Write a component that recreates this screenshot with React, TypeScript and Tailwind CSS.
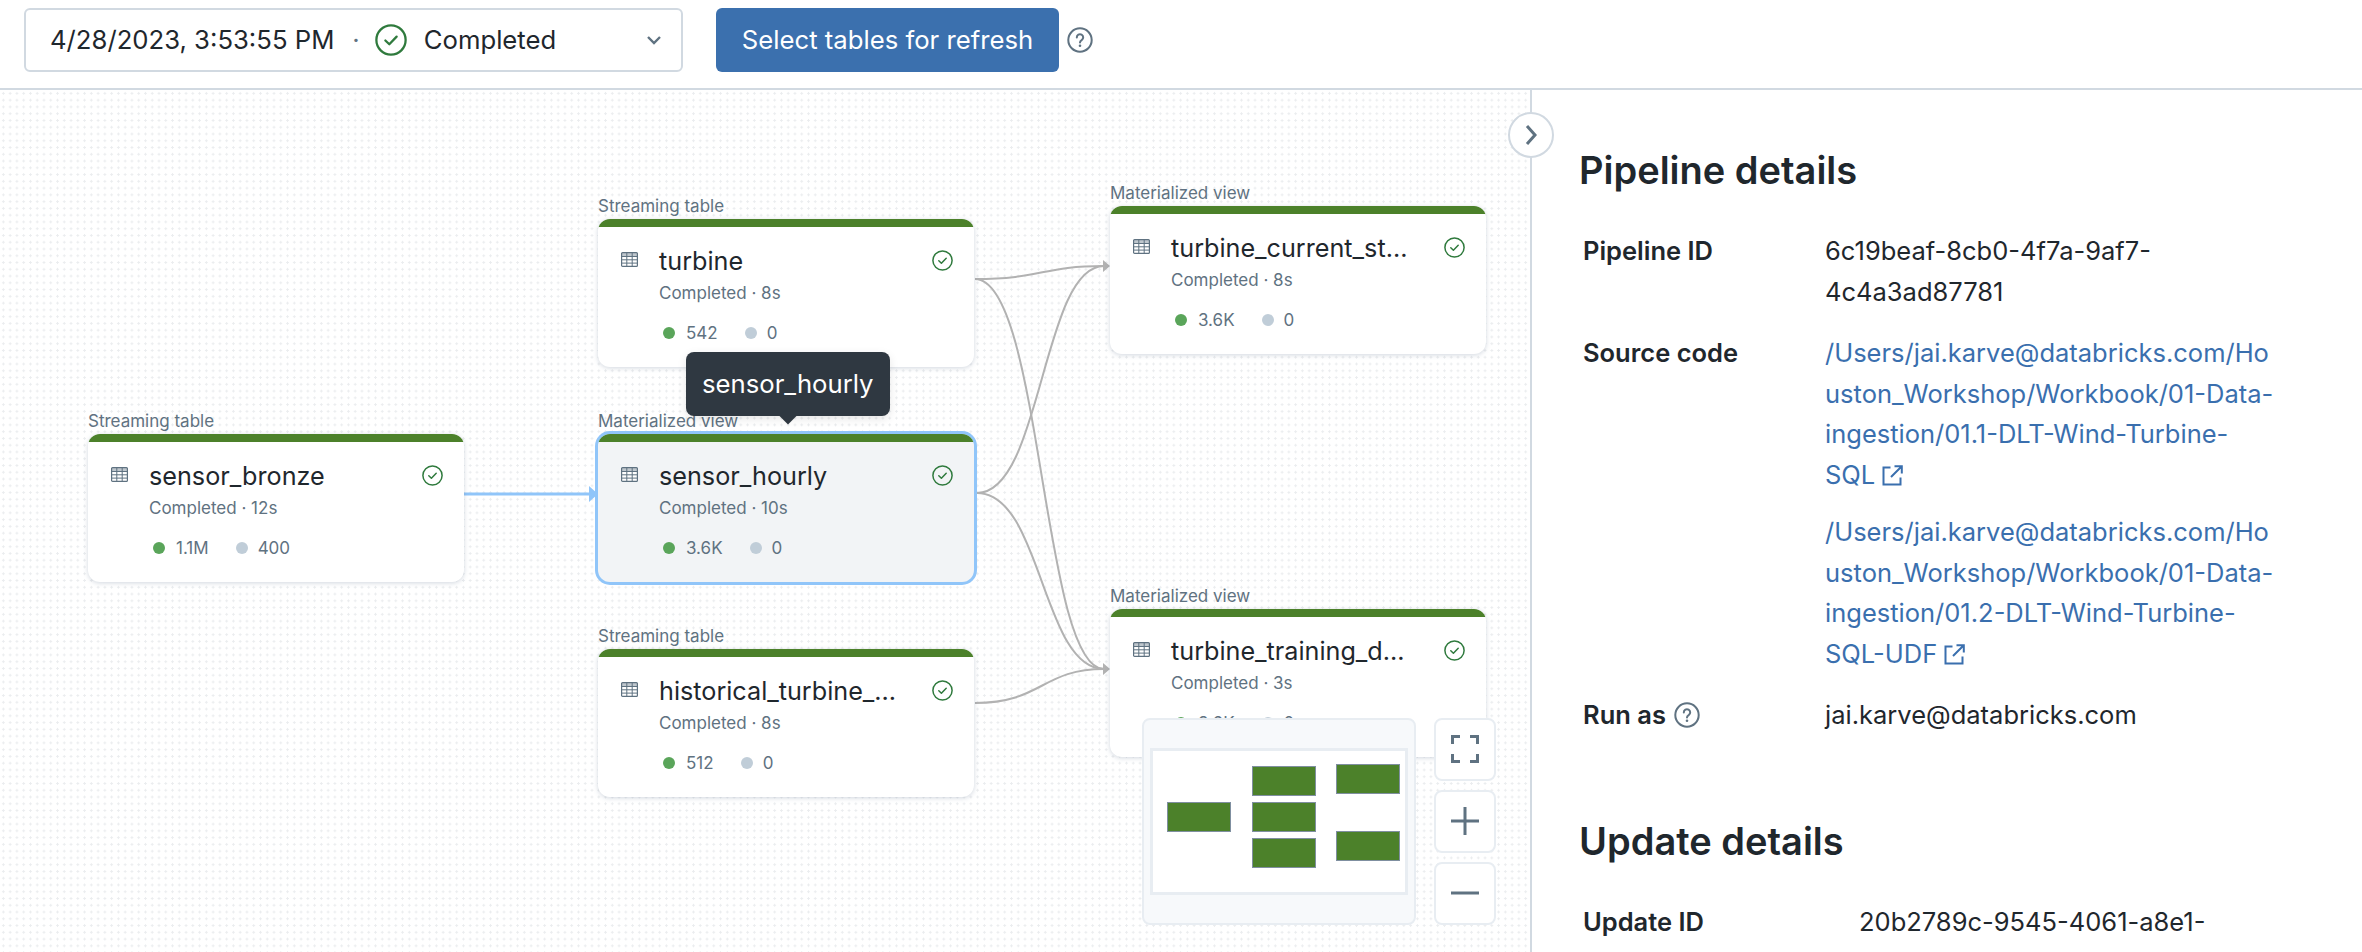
import React from "react";

const nodes = [
  { id: "bronze", kind: "Streaming table", name: "sensor_bronze", sub: "Completed · 12s", a: "1.1M", b: "400", x: 88, y: 344 },
  { id: "turbine", kind: "Streaming table", name: "turbine", sub: "Completed · 8s", a: "542", b: "0", x: 598, y: 129 },
  { id: "hourly", kind: "Materialized view", name: "sensor_hourly", sub: "Completed · 10s", a: "3.6K", b: "0", x: 598, y: 344, selected: true },
  { id: "historical", kind: "Streaming table", name: "historical_turbine_...", sub: "Completed · 8s", a: "512", b: "0", x: 598, y: 559 },
  { id: "current", kind: "Materialized view", name: "turbine_current_st...", sub: "Completed · 8s", a: "3.6K", b: "0", x: 1110, y: 116 },
  { id: "training", kind: "Materialized view", name: "turbine_training_d...", sub: "Completed · 3s", a: "3.6K", b: "0", x: 1110, y: 519 },
];

const edges = [
  "M975 189 C1042 189 1042 176 1104 176",
  "M975 189 C1042 189 1042 579 1104 579",
  "M977 403 C1042 403 1042 176 1104 176",
  "M977 403 C1042 403 1042 579 1104 579",
  "M975 613 C1042 613 1042 579 1104 579",
];

const miniRects = [
  [17, 54],
  [102, 18],
  [102, 54],
  [102, 90],
  [186, 16],
  [186, 83],
];

function CheckCircle({ size = 21 }: { size?: number }) {
  return (
    <svg width={size} height={size} viewBox="0 0 21 21" fill="none" className="shrink-0">
      <circle cx="10.5" cy="10.5" r="9.6" stroke="#2f7a3d" strokeWidth="1.5" />
      <path d="M6.8 10.8l2.6 2.5 4.8-5" stroke="#2f7a3d" strokeWidth="1.5" strokeLinecap="round" strokeLinejoin="round" />
    </svg>
  );
}

function TableIcon() {
  return (
    <svg width="17" height="15" viewBox="0 0 17 15" fill="none" className="shrink-0">
      <rect x="0.6" y="0.6" width="15.8" height="13.8" rx="1" fill="#fff" stroke="#5f7281" strokeWidth="1.2" />
      <path d="M0.6 1.6a1 1 0 0 1 1-1h13.8a1 1 0 0 1 1 1v2.4H0.6z" fill="#5f7281" opacity="0.4" />
      <path d="M0.6 4.5h15.8M0.6 7.8h15.8M0.6 11.1h15.8M5.8 0.6v13.8M11.2 0.6v13.8" stroke="#5f7281" strokeWidth="1" />
    </svg>
  );
}

function HelpIcon({ size = 26 }: { size?: number }) {
  return (
    <svg width={size} height={size} viewBox="0 0 26 26" fill="none" className="shrink-0">
      <circle cx="13" cy="13" r="11.7" stroke="#5f7281" strokeWidth="2" />
      <path d="M9.8 10.4a3.2 3.2 0 1 1 4.9 2.7c-1 .6-1.7 1.2-1.7 2.4" stroke="#5f7281" strokeWidth="2" strokeLinecap="round" />
      <circle cx="13" cy="18.8" r="1.3" fill="#5f7281" />
    </svg>
  );
}

function ExternalIcon() {
  return (
    <svg width="21" height="21" viewBox="0 0 21 21" fill="none" className="ml-[7px] inline-block align-[-2px]">
      <path d="M8.5 2.5H1.5v17h17v-7" stroke="#3a6fae" strokeWidth="2" />
      <path d="M12.5 1.2h7.3v7.3M19.5 1.5 9 12" stroke="#3a6fae" strokeWidth="2" />
    </svg>
  );
}

function Node({ kind, name, sub, a, b, x, y, selected }: (typeof nodes)[number] & { selected?: boolean }) {
  return (
    <div className="absolute h-[148px] w-[376px]" style={{ left: x, top: y }}>
      <div className="absolute bottom-full left-0 mb-[3px] text-[17px] leading-[20px] text-[#5f7281]">{kind}</div>
      <div
        className={
          selected
            ? "h-[148px] overflow-hidden rounded-[12px] bg-[#f2f4f6] shadow-[0_0_0_3px_#90c5f9]"
            : "h-[148px] overflow-hidden rounded-[12px] bg-white shadow-[0_1px_5px_rgba(90,110,140,0.28)]"
        }
      >
        <div className="h-[8px] bg-[#4c812a]" />
        <div className="flex pl-[23px] pr-[21px] pt-[25px]">
          <div className="w-[38px] shrink-0">
            <TableIcon />
          </div>
          <div className="min-w-0 flex-1">
            <div className="-mt-[7px] flex items-start justify-between">
              <div className="text-[25.2px] leading-[32px] text-[#1f272d]">{name}</div>
              <div className="pt-[5px]">
                <CheckCircle />
              </div>
            </div>
            <div className="mt-[4px] text-[17px] leading-[24px] text-[#5f7281]">{sub}</div>
            <div className="mt-[16px] flex items-center pl-[4px] text-[17px] leading-[24px] text-[#5f7281]">
              <span className="mr-[11px] h-[12px] w-[12px] rounded-full bg-[#5aa55a]" />
              <span className="mr-[27px]">{a}</span>
              <span className="mr-[10px] h-[12px] w-[12px] rounded-full bg-[#c0cdd8]" />
              <span>{b}</span>
            </div>
          </div>
        </div>
      </div>
    </div>
  );
}

function ZoomButton({ children }: { children: React.ReactNode }) {
  return (
    <div className="flex h-[62.5px] w-[62px] items-center justify-center rounded-[8px] border-2 border-[#e8edf2] bg-white">
      {children}
    </div>
  );
}

function Row({ label, children }: { label: React.ReactNode; children: React.ReactNode }) {
  return (
    <>
      <div className="pl-[4px] font-semibold text-[#1f272d]">{label}</div>
      <div className="text-[#1f272d]">{children}</div>
    </>
  );
}

export default function App() {
  return (
    <div className="flex h-[952px] w-[2362px] flex-col overflow-hidden bg-white font-[Inter,sans-serif]">
      <div className="flex h-[90px] shrink-0 items-start border-b-2 border-[#d1d9e1] pl-[24px] pt-[8px]">
        <div className="flex h-[64px] w-[659px] items-center rounded-[6px] border-2 border-[#d1d9e1] pl-[24px] pr-[18px] text-[25.7px] text-[#1f272d]">
          <span>4/28/2023, 3:53:55 PM</span>
          <span className="ml-[18px] mr-[15px] text-[#5f7281]">·</span>
          <CheckCircle size={32} />
          <span className="ml-[17px]">Completed</span>
          <svg width="18" height="12" viewBox="0 0 18 12" fill="none" className="ml-auto">
            <path d="M3 3l6 6 6-6" stroke="#5f7281" strokeWidth="2.4" />
          </svg>
        </div>
        <button className="ml-[33px] h-[64px] w-[343px] rounded-[6px] bg-[#3b70ae] text-[25.7px] text-white">
          Select tables for refresh
        </button>
        <div className="ml-[8px] mt-[19px]">
          <HelpIcon />
        </div>
      </div>

      <div className="flex min-h-0 flex-1">
        <div className="relative w-[1530px] shrink-0 bg-[radial-gradient(#ebedef_1px,transparent_1.2px)] bg-[size:6.77px_6.77px]">
          <svg width="1530" height="862" fill="none" className="absolute left-0 top-0">
            {edges.map((d) => (
              <path key={d} d={d} stroke="#b2b2b2" strokeWidth="2" />
            ))}
            <path d="M1103 170l7 6-7 6zM1103 573l7 6-7 6z" fill="#b2b2b2" />
            <path d="M464 404H591" stroke="#90c5f9" strokeWidth="3" />
            <path d="M589 396l9 8-9 8z" fill="#90c5f9" />
          </svg>

          {nodes.map((n) => (
            <Node key={n.id} {...n} />
          ))}

          <div className="absolute left-[686px] top-[262px] rounded-[8px] bg-[#2f3841] px-[16px] py-[15px] text-[25.7px] leading-[34px] text-white shadow-[0_3px_10px_rgba(0,0,0,0.1)]">
            sensor_hourly
            <div className="absolute -bottom-[6px] left-[96px] h-[12px] w-[12px] rotate-45 bg-[#2f3841]" />
          </div>

          <div className="absolute left-[1142px] top-[628px] flex h-[207px] w-[274px] items-center justify-center rounded-[8px] border-2 border-[#e8edf2] bg-[#f7f9fb]">
            <svg width="258" height="147" viewBox="0 0 258 147" className="bg-white">
              <rect x="1.5" y="1.5" width="255" height="144" fill="#fff" stroke="#e8edf2" strokeWidth="3" />
              {miniRects.map(([x, y]) => (
                <rect key={`${x}-${y}`} x={x + 0.5} y={y + 0.5} width="63" height="29" fill="#4c812a" stroke="#7f8fa0" strokeWidth="1" />
              ))}
            </svg>
          </div>

          <div className="absolute left-[1434px] top-[628px] flex flex-col gap-[9.5px]">
            <ZoomButton>
              <svg width="28" height="28" viewBox="0 0 28 28" fill="none" stroke="#5f7281" strokeWidth="3">
                <path d="M1.5 9V1.5H9M19 1.5h7.5V9M26.5 19v7.5H19M9 26.5H1.5V19" />
              </svg>
            </ZoomButton>
            <ZoomButton>
              <svg width="28" height="28" viewBox="0 0 28 28" fill="none" stroke="#5f7281" strokeWidth="3">
                <path d="M0 14h28M14 0v28" />
              </svg>
            </ZoomButton>
            <ZoomButton>
              <svg width="28" height="28" viewBox="0 0 28 28" fill="none" stroke="#5f7281" strokeWidth="3">
                <path d="M0 14h28" />
              </svg>
            </ZoomButton>
          </div>

          <div className="absolute left-[1508px] top-[22px] z-10 flex h-[46px] w-[46px] items-center justify-center rounded-full border-2 border-[#d1d9e1] bg-white">
            <svg width="14" height="22" viewBox="0 0 14 22" fill="none">
              <path d="M3 2l8 9-8 9" stroke="#5f7281" strokeWidth="3" />
            </svg>
          </div>
        </div>

        <div className="min-w-0 flex-1 border-l-2 border-[#d1d9e1] pl-[47px] pt-[58px] text-[25.5px] leading-[40.5px]">
          <h2 className="text-[38px] font-semibold leading-[44px] text-[#1f272d]">Pipeline details</h2>
          <div className="mt-[39px] grid grid-cols-[246px_1fr] gap-y-[21px]">
            <Row label="Pipeline ID">
              6c19beaf-8cb0-4f7a-9af7-
              <br />
              4c4a3ad87781
            </Row>
            <Row label="Source code">
              <div className="flex flex-col gap-[17px] text-[#3a6fae]">
                <div>
                  /Users/jai.karve@databricks.com/Ho
                  <br />
                  uston_Workshop/Workbook/01-Data-
                  <br />
                  ingestion/01.1-DLT-Wind-Turbine-
                  <br />
                  SQL
                  <ExternalIcon />
                </div>
                <div>
                  /Users/jai.karve@databricks.com/Ho
                  <br />
                  uston_Workshop/Workbook/01-Data-
                  <br />
                  ingestion/01.2-DLT-Wind-Turbine-
                  <br />
                  SQL-UDF
                  <ExternalIcon />
                </div>
              </div>
            </Row>
            <Row
              label={
                <span className="flex items-center gap-[8px]">
                  Run as
                  <HelpIcon />
                </span>
              }
            >
              jai.karve@databricks.com
            </Row>
          </div>
          <h2 className="mt-[83px] text-[38px] font-semibold leading-[44px] text-[#1f272d]">Update details</h2>
          <div className="mt-[39px] grid grid-cols-[280px_1fr]">
            <Row label="Update ID">20b2789c-9545-4061-a8e1-</Row>
          </div>
        </div>
      </div>
    </div>
  );
}
